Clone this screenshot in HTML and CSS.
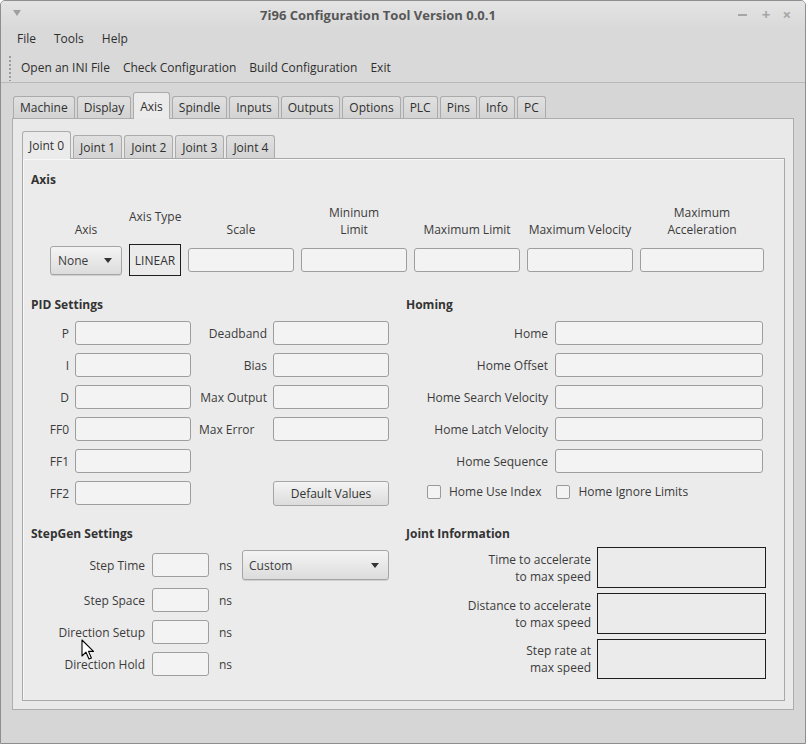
FILE: index.html
```html
<!DOCTYPE html>
<html>
<head>
<meta charset="utf-8">
<link rel="stylesheet" href="styles.css">
</head>
<body>
<div class="window">
  <div class="titlebar">
    <span class="wm-menu"></span>
    <span class="title">7i96 Configuration Tool Version 0.0.1</span>
    <div class="wm-buttons"><span class="wm-min"></span><span class="wm-max">+</span><span class="wm-close">×</span></div>
  </div>
  <div class="menubar"><span>File</span><span>Tools</span><span>Help</span></div>
  <div class="toolbar">
    <span class="grip"></span>
    <span class="tool">Open an INI File</span>
    <span class="tool">Check Configuration</span>
    <span class="tool">Build Configuration</span>
    <span class="tool">Exit</span>
  </div>
  <div class="main">
    <div class="tabbar outer">
      <span class="tab">Machine</span>
      <span class="tab">Display</span>
      <span class="tab active">Axis</span>
      <span class="tab">Spindle</span>
      <span class="tab">Inputs</span>
      <span class="tab">Outputs</span>
      <span class="tab">Options</span>
      <span class="tab">PLC</span>
      <span class="tab">Pins</span>
      <span class="tab">Info</span>
      <span class="tab">PC</span>
    </div>
    <div class="panel">
      <div class="tabbar inner">
        <span class="tab active">Joint 0</span>
        <span class="tab">Joint 1</span>
        <span class="tab">Joint 2</span>
        <span class="tab">Joint 3</span>
        <span class="tab">Joint 4</span>
      </div>
      <div class="inner-panel">
        <div class="sec-title">Axis</div>
        <div class="axis-grid">
          <div class="hdr">Axis</div>
          <div class="hdr hdr-type">Axis Type</div>
          <div class="hdr">Scale</div>
          <div class="hdr">Mininum<br>Limit</div>
          <div class="hdr">Maximum Limit</div>
          <div class="hdr">Maximum Velocity</div>
          <div class="hdr">Maximum<br>Acceleration</div>

          <div class="combo combo-axis"><span>None</span><span class="arrow"></span></div>
          <div class="boxed">LINEAR</div>
          <div class="input"></div>
          <div class="input"></div>
          <div class="input"></div>
          <div class="input"></div>
          <div class="input"></div>
        </div>

        <div class="mid">
          <div class="col">
            <div class="sec-title">PID Settings</div>
            <div class="pid-grid">
              <label class="lbl">P</label><div class="input"></div><label class="lbl">Deadband</label><div class="input"></div>
              <label class="lbl">I</label><div class="input"></div><label class="lbl">Bias</label><div class="input"></div>
              <label class="lbl">D</label><div class="input"></div><label class="lbl">Max Output</label><div class="input"></div>
              <label class="lbl">FF0</label><div class="input"></div><label class="lbl left">Max Error</label><div class="input"></div>
              <label class="lbl">FF1</label><div class="input"></div><span></span><span></span>
              <label class="lbl">FF2</label><div class="input"></div><span></span><div class="button">Default Values</div>
            </div>
          </div>
          <div class="col">
            <div class="sec-title">Homing</div>
            <div class="home-grid">
              <label class="lbl">Home</label><div class="input"></div>
              <label class="lbl">Home Offset</label><div class="input"></div>
              <label class="lbl">Home Search Velocity</label><div class="input"></div>
              <label class="lbl">Home Latch Velocity</label><div class="input"></div>
              <label class="lbl">Home Sequence</label><div class="input"></div>
              <div class="checks">
                <span class="check"><span class="cbox"></span>Home Use Index</span>
                <span class="check"><span class="cbox"></span>Home Ignore Limits</span>
              </div>
            </div>
          </div>
        </div>

        <div class="bottom">
          <div class="col">
            <div class="sec-title">StepGen Settings</div>
            <div class="step-grid">
              <label class="lbl">Step Time</label><div class="input"></div><span class="unit">ns</span><div class="combo combo-custom"><span>Custom</span><span class="arrow"></span></div>
              <label class="lbl">Step Space</label><div class="input"></div><span class="unit">ns</span><span></span>
              <label class="lbl">Direction Setup</label><div class="input"></div><span class="unit">ns</span><span></span>
              <label class="lbl">Direction Hold</label><div class="input"></div><span class="unit">ns</span><span></span>
            </div>
          </div>
          <div class="col">
            <div class="sec-title">Joint Information</div>
            <div class="info-grid">
              <label class="lbl">Time to accelerate<br>to max speed</label><div class="box"></div>
              <label class="lbl">Distance to accelerate<br>to max speed</label><div class="box"></div>
              <label class="lbl">Step rate at<br>max speed</label><div class="box"></div>
            </div>
          </div>
        </div>
      </div>
    </div>
  </div>
</div>
<svg class="cursor" width="14" height="22" viewBox="0 0 14 22"><path d="M1 1 L1 17 L5 13.2 L8 20 L10.4 19 L7.5 12.4 L12.5 12.4 Z" fill="#fff" stroke="#000" stroke-width="1.1" stroke-linejoin="round"/></svg>
</body>
</html>
```

FILE: styles.css
```css
html, body {
  margin: 0;
  padding: 0;
}
body {
  width: 806px;
  height: 744px;
  overflow: hidden;
  position: relative;
  background: #ffffff;
  font-family: "Open Sans", "Noto Sans", sans-serif;
  font-size: 12px;
  color: #3b3b3b;
}
.window {
  box-sizing: border-box;
  width: 806px;
  height: 744px;
  border: 1px solid #8e8e8e;
  border-radius: 5px 5px 0 0;
  background: #d6d6d6;
  display: flex;
  flex-direction: column;
  overflow: hidden;
}
.titlebar {
  height: 27px;
  flex: none;
  position: relative;
  display: flex;
  align-items: center;
  justify-content: center;
  padding-right: 50px;
  background: linear-gradient(#e4e4e4, #d9d9d9);
}
.title {
  font-weight: bold;
  color: #575757;
  font-size: 13px;
}
.wm-menu {
  position: absolute;
  left: 12px;
  top: 9px;
  width: 0;
  height: 0;
  border-left: 4px solid transparent;
  border-right: 4px solid transparent;
  border-top: 6px solid #a0a0a0;
}
.wm-buttons {
  position: absolute;
  right: 14px;
  top: 4px;
  display: flex;
  gap: 12px;
  color: #a6a6a6;
  font-weight: bold;
  font-size: 15px;
  line-height: 18px;
}
.wm-min {
  width: 9px;
  height: 2px;
  background: #a6a6a6;
  margin-top: 9px;
  margin-right: 3px;
}
.menubar {
  box-sizing: border-box;
  height: 23px;
  flex: none;
  display: flex;
  align-items: center;
  padding-left: 16px;
  padding-bottom: 3px;
  gap: 18px;
  background: #d9d9d9;
  color: #2e2e2e;
}
.toolbar {
  box-sizing: border-box;
  height: 32px;
  flex: none;
  display: flex;
  align-items: center;
  padding-left: 8px;
  padding-top: 2px;
  border-bottom: 1px solid #b9b9b9;
  background: #d9d9d9;
  color: #2e2e2e;
}
.grip {
  width: 2px;
  height: 26px;
  background-image: radial-gradient(circle, #9a9a9a 0.8px, transparent 1px);
  background-size: 2px 4px;
  margin-right: 10px;
}
.tool {
  margin-right: 13px;
}
.main {
  flex: 1;
  padding: 9px 11px 0 11px;
  display: flex;
  flex-direction: column;
}
.tabbar {
  display: flex;
  align-items: flex-end;
  gap: 2px;
}
.tabbar.outer {
  height: 26px;
  padding-left: 1px;
}
.tab {
  box-sizing: border-box;
  height: 22px;
  padding: 0 6px;
  display: flex;
  align-items: center;
  border: 1px solid #ababab;
  border-bottom: none;
  border-radius: 3px 3px 0 0;
  background: linear-gradient(#e0e0e0, #d3d3d3);
  color: #303030;
}
.tab.active {
  height: 27px;
  margin-bottom: -1px;
  background: #ebebeb;
  position: relative;
  z-index: 1;
  padding-top: 1px;
}
.panel {
  box-sizing: border-box;
  height: 592px;
  border: 1px solid #adadad;
  background: #e9e9e9;
  padding: 12px 8px 8px 9px;
  display: flex;
  flex-direction: column;
}
.tabbar.inner {
  height: 27px;
  padding-left: 0;
}
.tabbar.inner .tab {
  height: 23px;
  padding: 0 6px;
}
.tabbar.inner .tab.active {
  height: 28px;
  padding-top: 0;
  background: #ebebeb;
}
.inner-panel {
  box-sizing: border-box;
  height: 543px;
  border: 1px solid #a8a8a8;
  box-shadow: inset 1px 1px 0 #f7f7f7;
  background: #ebebeb;
  padding: 12px 8px 0 8px;
}
.sec-title {
  font-weight: bold;
  line-height: 17px;
  color: #333;
}
.axis-grid {
  margin-top: 16px;
  margin-left: 19px;
  display: grid;
  grid-template-columns: 72px 52px 106px 106px 106px 106px 124px;
  grid-template-rows: 34px 32px;
  column-gap: 7px;
  row-gap: 6px;
  align-items: center;
}
.hdr {
  align-self: end;
  text-align: center;
  line-height: 17px;
  white-space: nowrap;
}
.hdr-type {
  padding-bottom: 13px;
}
.input {
  box-sizing: border-box;
  height: 24px;
  border: 1px solid #9e9e9e;
  border-radius: 3px;
  background: #f3f3f3;
}
.boxed {
  box-sizing: border-box;
  height: 32px;
  border: 1px solid #1e1e1e;
  display: flex;
  align-items: center;
  justify-content: center;
  color: #333;
}
.combo {
  box-sizing: border-box;
  height: 29px;
  border: 1px solid #a5a5a5;
  border-radius: 3px;
  background: linear-gradient(#f4f4f4, #dcdcdc);
  display: flex;
  align-items: center;
  justify-content: space-between;
  padding: 0 9px 0 7px;
  box-shadow: 0 1px 0 #cfcfcf;
}
.combo-custom {
  height: 30px;
  padding-left: 6px;
}
.arrow {
  width: 0;
  height: 0;
  border-left: 4.5px solid transparent;
  border-right: 4.5px solid transparent;
  border-top: 5px solid #333;
}
.mid {
  margin-top: 20px;
  display: grid;
  grid-template-columns: 359px 358px;
  column-gap: 16px;
}
.lbl {
  text-align: right;
  align-self: center;
  white-space: nowrap;
  line-height: 17px;
}
.lbl.left {
  text-align: left;
  padding-left: 2px;
}
.pid-grid {
  margin-top: 8px;
  display: grid;
  grid-template-columns: 38px 116px 70px 116px;
  grid-auto-rows: 24px;
  column-gap: 6px;
  row-gap: 8px;
}
.button {
  box-sizing: border-box;
  height: 25px;
  border: 1px solid #a5a5a5;
  border-radius: 3px;
  background: linear-gradient(#f4f4f4, #dcdcdc);
  display: flex;
  align-items: center;
  justify-content: center;
  color: #333;
}
.home-grid {
  margin-top: 8px;
  display: grid;
  grid-template-columns: 142px 208px;
  grid-auto-rows: 24px;
  column-gap: 7px;
  row-gap: 8px;
}
.checks {
  grid-column: 1 / 3;
  display: flex;
  align-items: center;
  padding-left: 21px;
  margin-top: -3px;
}
.check {
  display: flex;
  align-items: center;
  margin-right: 15px;
}
.cbox {
  box-sizing: border-box;
  width: 14px;
  height: 14px;
  border: 1px solid #9a9a9a;
  border-radius: 2px;
  background: #f3f3f3;
  margin-right: 8px;
}
.bottom {
  margin-top: 20px;
  display: grid;
  grid-template-columns: 359px 360px;
  column-gap: 16px;
}
.step-grid {
  margin-top: 8px;
  display: grid;
  grid-template-columns: 121px 57px 33px 147px;
  grid-template-rows: 30px 24px 24px 24px;
  row-gap: 8px;
  align-items: center;
}
.step-grid .lbl {
  padding-right: 7px;
}
.unit {
  padding-left: 10px;
}
.info-grid {
  margin-top: 5px;
  display: grid;
  grid-template-columns: 185px 169px;
  grid-template-rows: 41px 41px 40px;
  column-gap: 6px;
  row-gap: 5px;
}
.box {
  border: 1px solid #1e1e1e;
}
.cursor {
  position: absolute;
  left: 81px;
  top: 639px;
}
```
